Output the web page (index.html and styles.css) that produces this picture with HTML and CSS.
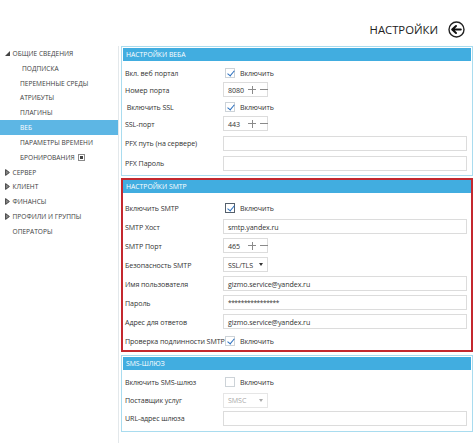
FILE: index.html
```html
<!DOCTYPE html>
<html lang="ru">
<head>
<meta charset="utf-8">
<title>Настройки</title>
<link rel="stylesheet" href="styles.css">
</head>
<body>
<header class="topbar">
  <span class="title">НАСТРОЙКИ</span>
  <svg class="back" width="17" height="17" viewBox="0 0 17 17">
    <circle cx="8.5" cy="8.5" r="7.5" fill="none" stroke="#222" stroke-width="1.4"/>
    <path d="M4.2 8.5 L8 5 M4.2 8.5 L8 12 M4.5 8.5 H12.8" fill="none" stroke="#111" stroke-width="2" stroke-linecap="round" stroke-linejoin="round"/>
  </svg>
</header>
<div class="layout">
  <nav class="sidebar">
    <div class="item top"><svg class="tri" width="5" height="5" viewBox="0 0 5 5"><path d="M5 0 V5 H0 Z" fill="#444"/></svg>ОБЩИЕ СВЕДЕНИЯ</div>
    <div class="item sub deep">ПОДПИСКА</div>
    <div class="item sub">ПЕРЕМЕННЫЕ СРЕДЫ</div>
    <div class="item sub">АТРИБУТЫ</div>
    <div class="item sub">ПЛАГИНЫ</div>
    <div class="item sub active">ВЕБ</div>
    <div class="item sub">ПАРАМЕТРЫ ВРЕМЕНИ</div>
    <div class="item sub">БРОНИРОВАНИЯ<span class="boxicon"><span></span></span></div>
    <div class="item top"><svg class="tri" width="5" height="7" viewBox="0 0 5 7"><path d="M0.6 0.6 L4.4 3.5 L0.6 6.4 Z" fill="#888" stroke="#444" stroke-width="1"/></svg>СЕРВЕР</div>
    <div class="item top"><svg class="tri" width="5" height="7" viewBox="0 0 5 7"><path d="M0.6 0.6 L4.4 3.5 L0.6 6.4 Z" fill="#888" stroke="#444" stroke-width="1"/></svg>КЛИЕНТ</div>
    <div class="item top"><svg class="tri" width="5" height="7" viewBox="0 0 5 7"><path d="M0.6 0.6 L4.4 3.5 L0.6 6.4 Z" fill="#888" stroke="#444" stroke-width="1"/></svg>ФИНАНСЫ</div>
    <div class="item top"><svg class="tri" width="5" height="7" viewBox="0 0 5 7"><path d="M0.6 0.6 L4.4 3.5 L0.6 6.4 Z" fill="#888" stroke="#444" stroke-width="1"/></svg>ПРОФИЛИ И ГРУППЫ</div>
    <div class="item top plain">ОПЕРАТОРЫ</div>
  </nav>
  <main class="content">
    <section class="section web">
      <div class="section-head">НАСТРОЙКИ ВЕБА</div>
      <div class="section-body">
        <div class="row r17"><span class="label">Вкл. веб портал</span><span class="ctrl"><span class="check on"></span><span class="cl">Включить</span></span></div>
        <div class="row r17"><span class="label">Номер порта</span><span class="ctrl"><span class="spin"><span class="val">8080</span><span class="plus"></span><span class="minus"></span></span></span></div>
        <div class="row r17"><span class="label">&nbsp;Включить SSL</span><span class="ctrl"><span class="check on"></span><span class="cl">Включить</span></span></div>
        <div class="row r17"><span class="label">SSL-порт</span><span class="ctrl"><span class="spin"><span class="val">443</span><span class="plus"></span><span class="minus"></span></span></span></div>
        <div class="row r20 gap"><span class="label">PFX путь (на сервере)</span><span class="ctrl"><span class="input"></span></span></div>
        <div class="row r20"><span class="label">PFX Пароль</span><span class="ctrl"><span class="input"></span></span></div>
      </div>
    </section>
    <section class="section smtp">
      <div class="section-head">НАСТРОЙКИ SMTP</div>
      <div class="section-body">
        <div class="row r19"><span class="label">Включить SMTP</span><span class="ctrl"><span class="check on focus"></span><span class="cl">Включить</span></span></div>
        <div class="row r19"><span class="label">SMTP Хост</span><span class="ctrl"><span class="input">smtp.yandex.ru</span></span></div>
        <div class="row r19"><span class="label">SMTP Порт</span><span class="ctrl"><span class="spin"><span class="val">465</span><span class="plus"></span><span class="minus"></span></span></span></div>
        <div class="row r19"><span class="label">Безопасность SMTP</span><span class="ctrl"><span class="select"><span class="val">SSL/TLS</span><span class="caret"></span></span></span></div>
        <div class="row r19"><span class="label">Имя пользователя</span><span class="ctrl"><span class="input">gizmo.service@yandex.ru</span></span></div>
        <div class="row r19"><span class="label">Пароль</span><span class="ctrl"><span class="input pw">****************</span></span></div>
        <div class="row r19"><span class="label">Адрес для ответов</span><span class="ctrl"><span class="input">gizmo.service@yandex.ru</span></span></div>
        <div class="row r19"><span class="label">Проверка подлинности SMTP</span><span class="ctrl"><span class="check on"></span><span class="cl">Включить</span></span></div>
      </div>
    </section>
    <section class="section sms">
      <div class="section-head">SMS-ШЛЮЗ</div>
      <div class="section-body">
        <div class="row r18"><span class="label">Включить SMS-шлюз</span><span class="ctrl"><span class="check"></span><span class="cl">Включить</span></span></div>
        <div class="row r18"><span class="label">Поставщик услуг</span><span class="ctrl"><span class="select disabled"><span class="val">SMSC</span><span class="caret"></span></span></span></div>
        <div class="row r18"><span class="label">URL-адрес шлюза</span><span class="ctrl"><span class="input"></span></span></div>
      </div>
    </section>
  </main>
</div>
</body>
</html>
```

FILE: styles.css
```css
* { box-sizing: border-box; }
html, body { margin: 0; padding: 0; background: #fff; }
body {
  width: 474px;
  height: 443px;
  overflow: hidden;
  font-family: "Open Sans", "Noto Sans", sans-serif;
  color: #333;
}

.topbar {
  height: 46px;
  display: flex;
  justify-content: flex-end;
  align-items: center;
  padding: 13px 9px 0 0;
  gap: 10px;
}
.title {
  font-size: 11.3px;
  color: #222;
}
.back { display: block; }

.layout {
  display: flex;
  align-items: stretch;
  height: 397px;
}

.sidebar {
  width: 119px;
  flex: none;
  border-right: 1px solid #e3e8eb;
}
.item {
  height: 14.83px;
  display: flex;
  align-items: center;
  font-size: 6.6px;
  color: #3d3d3d;
  white-space: nowrap;
}
.item.top { padding-left: 5px; }
.item.top .tri { margin-right: 2.5px; flex: none; }
.item.top.plain { padding-left: 12.5px; }
.item.sub { padding-left: 20px; }
.item.sub.deep { padding-left: 22px; }
.item.active { background: #5db6e4; color: #fff; }
.boxicon {
  width: 7px;
  height: 7px;
  border: 1px solid #8a8a8a;
  margin-left: 3px;
  display: flex;
  align-items: center;
  justify-content: center;
}
.boxicon span { width: 3px; height: 3px; background: #444; }

.content {
  flex: 1;
  padding: 0 1px 0 2px;
  display: flex;
  flex-direction: column;
}

.section {
  border: 1px solid #a9dcef;
  padding: 1px 1px 1px;
}
.section.smtp {
  border: 2px solid #c3282f;
  padding: 0;
  margin-top: 2px;
}
.section.sms { margin-top: 3px; }

.section-head {
  height: 13px;
  background: #41ade0;
  color: #fff;
  font-size: 6.8px;
  line-height: 13px;
  padding-left: 3px;
}

.section-body {
  display: flex;
  flex-direction: column;
  padding: 3px 4px 1px 2px;
}
.smtp .section-body { padding: 5px 4px 0 2px; }
.sms .section-body { padding: 3px 4px 3px 2px; }

.row {
  display: grid;
  grid-template-columns: 98px 1fr;
  align-items: center;
  font-size: 7.1px;
  letter-spacing: -0.08px;
}
.r17 { height: 17px; }
.r18 { height: 18px; }
.r19 { height: 19px; }
.r20 { height: 20px; }
.row.gap { margin-top: 1px; }

.label { white-space: nowrap; color: #333; }
.ctrl { display: flex; align-items: center; min-width: 0; }

.check {
  width: 10px;
  height: 10px;
  border: 1px solid #cdd3d8;
  background: #fff;
  margin-left: 2px;
  position: relative;
  flex: none;
}
.check.focus { border-color: #55606c; }
.check.on::after {
  content: "";
  position: absolute;
  left: 2.6px;
  top: 0.2px;
  width: 3px;
  height: 6px;
  border-right: 1.6px solid #2a6fbf;
  border-bottom: 1.6px solid #2a6fbf;
  transform: rotate(40deg);
}
.cl { margin-left: 5px; }

.spin, .select {
  width: 45px;
  height: 15px;
  border: 1px solid #dcdcdc;
  display: flex;
  align-items: center;
  padding-left: 4px;
}
.spin .val { width: 20px; flex: none; }
.plus, .minus { position: relative; width: 8px; height: 8px; flex: none; }
.plus { margin-right: 4px; }
.plus::before, .minus::before {
  content: "";
  position: absolute;
  left: 0;
  top: 3.5px;
  width: 8px;
  height: 1px;
  background: #8a8a8a;
}
.plus::after {
  content: "";
  position: absolute;
  left: 3.5px;
  top: 0;
  width: 1px;
  height: 8px;
  background: #8a8a8a;
}
.select .val { width: 31px; flex: none; }
.caret {
  width: 0;
  height: 0;
  border-left: 2.2px solid transparent;
  border-right: 2.2px solid transparent;
  border-top: 3px solid #333;
}
.select.disabled { border-color: #e6e6e6; color: #aaa; }
.select.disabled .caret { border-top-color: #aaa; }

.input {
  flex: 1;
  height: 15px;
  border: 1px solid #dcdcdc;
  display: flex;
  align-items: center;
  padding-left: 4px;
  white-space: nowrap;
  overflow: hidden;
}
.input.pw { font-size: 6.5px; letter-spacing: -0.4px; }
```
